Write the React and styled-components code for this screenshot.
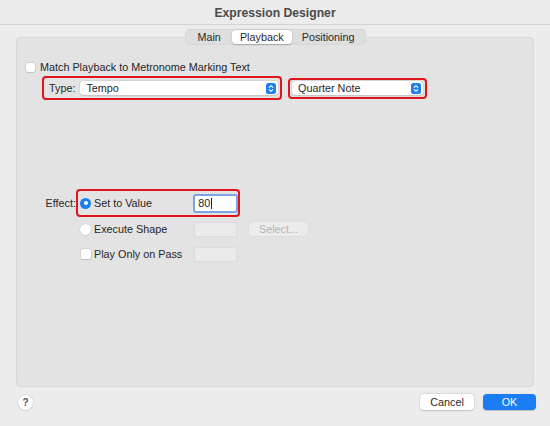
import React from "react";
import styled, { createGlobalStyle } from "styled-components";

/***************** STYLES ******************/
const Global = createGlobalStyle`
  html, body { margin: 0; padding: 0; }
  body {
    background: #ececec;
    font-family: "Liberation Sans", Arial, sans-serif;
    color: #262626;
  }
`;

const Window = styled.div`
  width: 550px;
  height: 426px;
  background: #ececec;
  display: flex;
  flex-direction: column;
  overflow: hidden;
`;

const TitleBar = styled.div`
  height: 25px;
  border-bottom: 1px solid #d3d3d3;
  display: flex;
  align-items: center;
  justify-content: center;
  font-size: 12.2px;
  font-weight: bold;
  color: #4b4b4b;
  box-sizing: border-box;
  padding-top: 1px;
`;

const Body = styled.div`
  flex: 1;
  display: flex;
  flex-direction: column;
  padding: 4px 16px 0 16px;
`;

const Tabs = styled.div`
  align-self: center;
  margin-left: 1px;
  display: flex;
  align-items: center;
  height: 16px;
  padding: 0 1px;
  background: #dedede;
  border-radius: 5px;
  margin-bottom: -8px;
  position: relative;
  z-index: 1;
  box-shadow: inset 0 0 0 0.5px #d2d2d2;
`;

const Tab = styled.div`
  height: 14px;
  display: flex;
  align-items: center;
  justify-content: center;
  padding: 0 ${(p) => p.$pad}px;
  font-size: 10.8px;
  color: #2a2a2a;
  border-radius: 4px;
  background: ${(p) => (p.$active ? "#ffffff" : "transparent")};
  box-shadow: ${(p) => (p.$active ? "0 0.5px 1.5px rgba(0,0,0,0.25)" : "none")};
`;

const Panel = styled.div`
  height: 350px;
  box-sizing: border-box;
  background: #e3e3e3;
  border: 1px solid #d9d9d9;
  border-radius: 4px;
  padding: 23px 0 0 8px;
  display: flex;
  flex-direction: column;
`;

const CheckRow = styled.div`
  display: flex;
  align-items: center;
  gap: 5px;
  font-size: 10.8px;
  height: 12px;
`;

const CheckBox = styled.span`
  width: ${(p) => p.$size || 9}px;
  height: ${(p) => p.$size || 9}px;
  background: #fff;
  border-radius: 2px;
  box-shadow: 0 0 0 0.5px #c4c4c4, 0 0.5px 1px rgba(0, 0, 0, 0.15);
  margin-left: 1px;
  flex-shrink: 0;
`;

const PopupLine = styled.div`
  display: flex;
  gap: 6px;
  margin: 3px 0 0 17px;
  align-items: center;
`;

const RedBox = styled.div`
  border: 2px solid #e0141c;
  border-radius: 4px;
  box-sizing: border-box;
  display: flex;
  align-items: center;
  width: ${(p) => p.$w}px;
  height: ${(p) => p.$h}px;
  padding-left: ${(p) => p.$pl || 2}px;
`;

const Label = styled.span`
  font-size: 10.8px;
  color: #2a2a2a;
`;

const Popup = styled.div`
  height: 14px;
  width: ${(p) => p.$w}px;
  margin-left: ${(p) => p.$ml || 0}px;
  background: #fff;
  border-radius: 4px;
  box-shadow: 0 0 0 0.5px #cfcfcf, 0 0.5px 1.5px rgba(0, 0, 0, 0.2);
  display: flex;
  align-items: center;
  justify-content: space-between;
  padding: 0 2px 0 6px;
  box-sizing: border-box;
  font-size: 10.8px;
`;

const Stepper = styled.svg`
  width: 10px;
  height: 11px;
  display: block;
`;

const EffectArea = styled.div`
  margin-top: 89px;
  display: flex;
`;

const EffectLabel = styled.span`
  width: 59px;
  text-align: right;
  font-size: 10.8px;
  margin-top: 8px;
  margin-left: -8px;
`;

const Rows = styled.div`
  display: flex;
  flex-direction: column;
`;

const OptionRow = styled.div`
  display: flex;
  align-items: center;
  height: ${(p) => p.$h || 25}px;
  padding-left: 4px;
`;

const Choice = styled.div`
  width: 113px;
  display: flex;
  align-items: center;
  gap: 3px;
  font-size: 10.8px;
`;

const Radio = styled.span`
  width: 11px;
  height: 11px;
  border-radius: 50%;
  flex-shrink: 0;
  box-sizing: border-box;
  background: ${(p) => (p.$on ? "#1c7ff2" : "#ffffff")};
  box-shadow: ${(p) =>
    p.$on ? "none" : "0 0 0 0.5px #c8c8c8, 0 0.5px 1px rgba(0,0,0,0.15)"};
  display: flex;
  align-items: center;
  justify-content: center;
  &::after {
    content: "";
    width: 4px;
    height: 4px;
    border-radius: 50%;
    background: ${(p) => (p.$on ? "#ffffff" : "transparent")};
  }
`;

const Field = styled.div`
  width: ${(p) => p.$w || 43}px;
  height: ${(p) => p.$h || 15}px;
  margin-left: ${(p) => p.$ml || 1}px;
  box-sizing: border-box;
  background: ${(p) => (p.$enabled ? "#ffffff" : "#ebebeb")};
  border: ${(p) => (p.$focus ? "2px solid #78a6e4" : "0.5px solid #dcdcdc")};
  border-radius: ${(p) => (p.$focus ? "3px" : "1px")};
  font-size: 10.8px;
  display: flex;
  align-items: center;
  padding-left: 3px;
`;

const Caret = styled.span`
  width: 1px;
  height: 11px;
  background: #222;
  margin-left: 1px;
`;

const SmallButton = styled.div`
  margin-left: 12px;
  width: 59px;
  height: 14px;
  border-radius: 4px;
  background: #ececec;
  box-shadow: 0 0 0 0.5px #d8d8d8;
  color: #b3b3b3;
  font-size: 10.8px;
  display: flex;
  align-items: center;
  justify-content: center;
`;

const Footer = styled.div`
  display: flex;
  align-items: center;
  height: 30px;
  margin-right: -2px;
  padding: 0 0 0 2px;
`;

const Help = styled.div`
  width: 15px;
  height: 15px;
  border-radius: 50%;
  background: #fff;
  box-shadow: 0 0 0 0.5px #cfcfcf, 0 0.5px 1.5px rgba(0, 0, 0, 0.2);
  font-size: 10px;
  font-weight: bold;
  color: #555;
  display: flex;
  align-items: center;
  justify-content: center;
  margin-top: 1px;
`;

const Spacer = styled.div`
  flex: 1;
`;

const Button = styled.div`
  width: ${(p) => p.$w || 54}px;
  height: 16px;
  border-radius: 4px;
  margin-left: ${(p) => p.$ml || 0}px;
  display: flex;
  align-items: center;
  justify-content: center;
  font-size: 10.8px;
  background: ${(p) => (p.$primary ? "#1a7df4" : "#ffffff")};
  color: ${(p) => (p.$primary ? "#ffffff" : "#2a2a2a")};
  box-shadow: ${(p) =>
    p.$primary
      ? "0 0.5px 1px rgba(0,0,0,0.2)"
      : "0 0 0 0.5px #cfcfcf, 0 0.5px 1.5px rgba(0,0,0,0.2)"};
`;

/***************** COMPONENT ******************/
const StepIcon = () => (
  <Stepper viewBox="0 0 10 11">
    <rect x="0" y="0" width="10" height="11" rx="2.5" fill="#1c7ff2" />
    <path
      d="M3.2 4.3 L5 2.6 L6.8 4.3 M3.2 6.7 L5 8.4 L6.8 6.7"
      fill="none"
      stroke="#fff"
      strokeWidth="1.1"
      strokeLinecap="round"
      strokeLinejoin="round"
    />
  </Stepper>
);

const App = () => {
  return (
    <>
      <Global />
      <Window>
        <TitleBar>Expression Designer</TitleBar>
        <Body>
          <Tabs>
            <Tab $pad={11}>Main</Tab>
            <Tab $pad={8} $active>
              Playback
            </Tab>
            <Tab $pad={10}>Positioning</Tab>
          </Tabs>
          <Panel>
            <CheckRow>
              <CheckBox />
              Match Playback to Metronome Marking Text
            </CheckRow>
            <PopupLine>
              <RedBox $w={240} $h={24} $pl={5}>
                <Label>Type:</Label>
                <Popup $w={198} $ml={5}>
                  Tempo
                  <StepIcon />
                </Popup>
              </RedBox>
              <RedBox $w={139} $h={21} $pl={2}>
                <Popup $w={131}>
                  Quarter Note
                  <StepIcon />
                </Popup>
              </RedBox>
            </PopupLine>
            <EffectArea>
              <EffectLabel>Effect:</EffectLabel>
              <Rows>
                <RedBox $w={164} $h={28} $pl={2}>
                  <Choice>
                    <Radio $on />
                    Set to Value
                  </Choice>
                  <Field $enabled $focus $w={45} $h={19} $ml={0}>
                    80
                    <Caret />
                  </Field>
                </RedBox>
                <OptionRow $h={24}>
                  <Choice>
                    <Radio />
                    Execute Shape
                  </Choice>
                  <Field />
                  <SmallButton>Select...</SmallButton>
                </OptionRow>
                <OptionRow $h={26}>
                  <Choice>
                    <CheckBox $size={10} />
                    Play Only on Pass
                  </Choice>
                  <Field />
                </OptionRow>
              </Rows>
            </EffectArea>
          </Panel>
          <Footer>
            <Help>?</Help>
            <Spacer />
            <Button>Cancel</Button>
            <Button $primary $w={53} $ml={9}>
              OK
            </Button>
          </Footer>
        </Body>
      </Window>
    </>
  );
};

export default App;
